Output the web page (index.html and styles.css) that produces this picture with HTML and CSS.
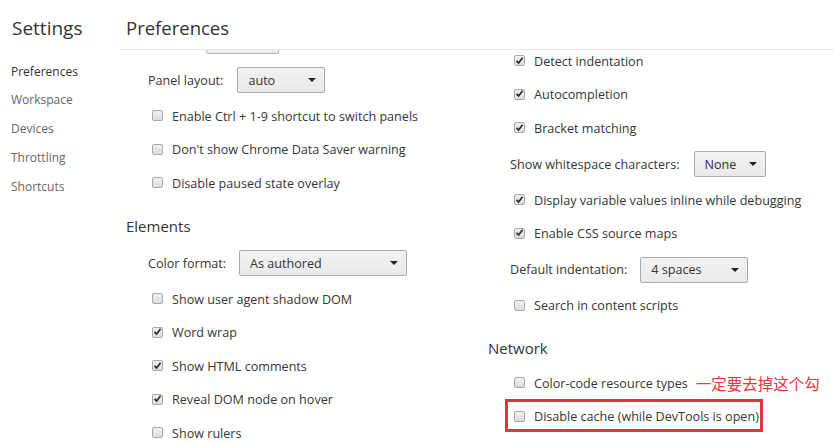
FILE: index.html
```html
<!DOCTYPE html>
<html lang="zh">
<head>
<meta charset="utf-8">
<title>Settings</title>
<link rel="stylesheet" href="styles.css">
</head>
<body>
<div class="app">
  <aside class="sidebar">
    <div class="sb-title">Settings</div>
    <nav class="sb-nav">
      <div class="sb-item active">Preferences</div>
      <div class="sb-item">Workspace</div>
      <div class="sb-item">Devices</div>
      <div class="sb-item">Throttling</div>
      <div class="sb-item">Shortcuts</div>
    </nav>
  </aside>
  <main class="main">
    <header class="main-head">Preferences</header>
    <div class="viewport">
      <div class="columns">
        <section class="col col-left">
          <div class="stub-row"><span class="stub-btn"></span></div>
          <div class="select-row">
            <span class="label">Panel layout:</span>
            <span class="select w88"><span class="sel-text">auto</span><span class="arrow"></span></span>
          </div>
          <div class="row"><span class="cb"></span><span class="label">Enable Ctrl + 1-9 shortcut to switch panels</span></div>
          <div class="row"><span class="cb"></span><span class="label">Don't show Chrome Data Saver warning</span></div>
          <div class="row"><span class="cb"></span><span class="label">Disable paused state overlay</span></div>

          <h2 class="heading">Elements</h2>
          <div class="select-row">
            <span class="label">Color format:</span>
            <span class="select w168 tight"><span class="sel-text">As authored</span><span class="arrow"></span></span>
          </div>
          <div class="row"><span class="cb"></span><span class="label">Show user agent shadow DOM</span></div>
          <div class="row"><span class="cb checked"><svg viewBox="0 0 9 9" width="9" height="9"><path d="M1.5 4.8 L3.6 6.9 L7.6 1.8" fill="none" stroke="#2b2b2b" stroke-width="1.7"/></svg></span><span class="label">Word wrap</span></div>
          <div class="row"><span class="cb checked"><svg viewBox="0 0 9 9" width="9" height="9"><path d="M1.5 4.8 L3.6 6.9 L7.6 1.8" fill="none" stroke="#2b2b2b" stroke-width="1.7"/></svg></span><span class="label">Show HTML comments</span></div>
          <div class="row"><span class="cb checked"><svg viewBox="0 0 9 9" width="9" height="9"><path d="M1.5 4.8 L3.6 6.9 L7.6 1.8" fill="none" stroke="#2b2b2b" stroke-width="1.7"/></svg></span><span class="label">Reveal DOM node on hover</span></div>
          <div class="row"><span class="cb"></span><span class="label">Show rulers</span></div>
        </section>

        <section class="col col-right">
          <div class="row"><span class="cb checked"><svg viewBox="0 0 9 9" width="9" height="9"><path d="M1.5 4.8 L3.6 6.9 L7.6 1.8" fill="none" stroke="#2b2b2b" stroke-width="1.7"/></svg></span><span class="label">Detect indentation</span></div>
          <div class="row"><span class="cb checked"><svg viewBox="0 0 9 9" width="9" height="9"><path d="M1.5 4.8 L3.6 6.9 L7.6 1.8" fill="none" stroke="#2b2b2b" stroke-width="1.7"/></svg></span><span class="label">Autocompletion</span></div>
          <div class="row"><span class="cb checked"><svg viewBox="0 0 9 9" width="9" height="9"><path d="M1.5 4.8 L3.6 6.9 L7.6 1.8" fill="none" stroke="#2b2b2b" stroke-width="1.7"/></svg></span><span class="label">Bracket matching</span></div>
          <div class="select-row">
            <span class="label">Show whitespace characters:</span>
            <span class="select w72"><span class="sel-text">None</span><span class="arrow"></span></span>
          </div>
          <div class="row"><span class="cb checked"><svg viewBox="0 0 9 9" width="9" height="9"><path d="M1.5 4.8 L3.6 6.9 L7.6 1.8" fill="none" stroke="#2b2b2b" stroke-width="1.7"/></svg></span><span class="label">Display variable values inline while debugging</span></div>
          <div class="row"><span class="cb checked"><svg viewBox="0 0 9 9" width="9" height="9"><path d="M1.5 4.8 L3.6 6.9 L7.6 1.8" fill="none" stroke="#2b2b2b" stroke-width="1.7"/></svg></span><span class="label">Enable CSS source maps</span></div>
          <div class="select-row">
            <span class="label">Default indentation:</span>
            <span class="select w108 tight"><span class="sel-text">4 spaces</span><span class="arrow"></span></span>
          </div>
          <div class="row"><span class="cb"></span><span class="label">Search in content scripts</span></div>

          <h2 class="heading">Network</h2>
          <div class="row"><span class="cb"></span><span class="label">Color-code resource types</span><span class="note">一定要去掉这个勾</span></div>
          <div class="row marked"><span class="cb"></span><span class="label">Disable cache (while DevTools is open)</span><span class="mark-box"></span></div>
        </section>
      </div>
    </div>
  </main>
</div>
</body>
</html>
```

FILE: styles.css
```css
* { box-sizing: border-box; }

html, body {
  margin: 0;
  padding: 0;
  background: #ffffff;
}

body {
  font-family: "Open Sans", "Noto Sans", "Noto Sans CJK SC", sans-serif;
  font-size: 12.6px;
  color: #363636;
  width: 834px;
  height: 443px;
  overflow: hidden;
}

.app {
  display: flex;
  height: 443px;
}

.sidebar {
  width: 120px;
  flex: none;
}

.sb-title {
  height: 49px;
  padding: 14px 0 0 12px;
  font-size: 19px;
  line-height: 28px;
  color: #333333;
}

.sb-nav {
  padding-top: 8.6px;
}

.sb-item {
  height: 28.75px;
  line-height: 28.75px;
  padding-left: 11px;
  font-size: 12px;
  color: #666666;
}

.sb-item.active {
  color: #333333;
}

.main {
  flex: 1;
  display: flex;
  flex-direction: column;
  min-width: 0;
}

.main-head {
  height: 50px;
  padding: 13.5px 0 0 6px;
  font-size: 18.5px;
  line-height: 28px;
  color: #333333;
  border-bottom: 1px solid #e7e7e7;
  position: relative;
  z-index: 1;
  background: #fff;
}

.viewport {
  flex: 1;
  overflow: hidden;
}

.columns {
  display: flex;
  padding-left: 6px;
}

.col-left {
  width: 362px;
  flex: none;
}

.col-right {
  flex: 1;
  margin-top: -5.75px;
}

.stub-row {
  display: flow-root;
  height: 10.75px;
}

.stub-btn {
  display: block;
  margin: -10px 0 0 80px;
  width: 73px;
  height: 14px;
  border: 1px solid #b4b4b4;
  border-radius: 2px;
  background: #ededed;
}

.row {
  position: relative;
  height: 33.5px;
  display: flex;
  align-items: center;
  padding-left: 26px;
}

.select-row {
  height: 38.5px;
  display: flex;
  align-items: center;
  padding-left: 22px;
}

.label {
  white-space: nowrap;
  color: #363636;
}

.cb {
  flex: none;
  width: 11px;
  height: 11px;
  margin-right: 9px;
  margin-top: -1px;
  border: 1px solid #a8a8a8;
  border-radius: 2px;
  background: linear-gradient(#f0f0f0, #dcdcdc);
  display: flex;
  align-items: center;
  justify-content: center;
}

.cb svg {
  display: block;
  margin-top: -1px;
}

.heading {
  margin: 10.5px 0 0 0;
  height: 33.5px;
  padding-bottom: 2.5px;
  display: flex;
  align-items: center;
  font-size: 15px;
  font-weight: normal;
  color: #333333;
}

.select {
  flex: none;
  position: relative;
  height: 26px;
  margin-left: 14px;
  padding-left: 10px;
  display: flex;
  align-items: center;
  border: 1px solid #a9a9a9;
  border-radius: 2px;
  background: linear-gradient(#f2f2f2, #e9e9e9);
  color: #333333;
}

.select.tight {
  margin-left: 13px;
}

.w88 { width: 88px; }
.w168 { width: 168px; }
.w72 { width: 72px; }
.w108 { width: 108px; }

.arrow {
  position: absolute;
  right: 8px;
  top: 10px;
  width: 0;
  height: 0;
  border-left: 4px solid transparent;
  border-right: 4px solid transparent;
  border-top: 4px solid #222222;
}

.note {
  margin-left: 8px;
  font-family: "Noto Sans CJK SC", sans-serif;
  font-size: 15.5px;
  color: #e8353c;
  white-space: nowrap;
}

.mark-box {
  position: absolute;
  left: 17px;
  top: -0.5px;
  width: 258px;
  height: 33px;
  border: 3px solid #e0353c;
}
```
